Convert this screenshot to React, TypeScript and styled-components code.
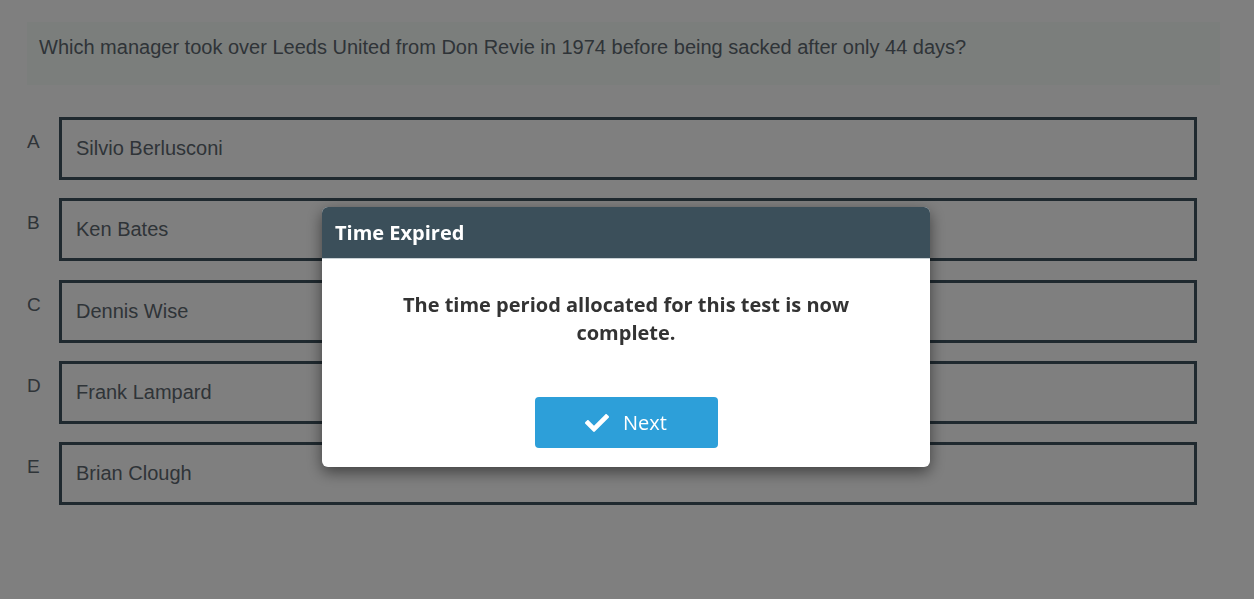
import styled, { createGlobalStyle } from "styled-components";
import { FaCheck } from "react-icons/fa";

const GlobalStyle = createGlobalStyle`
  html, body {
    margin: 0;
    padding: 0;
    background: #ffffff;
  }
  body {
    font-family: "Liberation Sans", Arial, sans-serif;
  }
`;

const Page = styled.main`
  width: 1254px;
  height: 599px;
  box-sizing: border-box;
  padding: 22px 34px 0 27px;
`;

const Question = styled.div`
  height: 63px;
  box-sizing: border-box;
  background: #f6fcf9;
  padding: 14px 12px 0;
  font-size: 20px;
  color: #5e6870;
`;

const Options = styled.ol`
  list-style: none;
  margin: 32px 0 0;
  padding: 0;
  display: flex;
  flex-direction: column;
  gap: 18.3px;
  width: 1170px;
`;

const OptionRow = styled.li`
  display: flex;
  align-items: flex-start;
`;

const Letter = styled.span`
  width: 32px;
  padding-top: 14px;
  font-size: 19px;
  color: #5e6870;
`;

const Answer = styled.div`
  flex: 1;
  height: 63px;
  box-sizing: border-box;
  border: 3px solid #3e525e;
  padding: 0 14px;
  display: flex;
  align-items: center;
  font-size: 20px;
  color: #5e6870;
`;

const Overlay = styled.div`
  position: fixed;
  inset: 0;
  background: rgba(0, 0, 0, 0.5);
  display: flex;
  justify-content: center;
  align-items: flex-start;
  padding-top: 207px;
  padding-right: 2px;
  box-sizing: border-box;
`;

const Modal = styled.div`
  width: 608px;
  background: #ffffff;
  border-radius: 6px;
  overflow: hidden;
  box-shadow: 0 5px 15px rgba(0, 0, 0, 0.5);
  font-family: "Open Sans", "Noto Sans", sans-serif;
`;

const ModalHeader = styled.header`
  height: 52px;
  background: #3b4f5a;
  display: flex;
  align-items: center;
  padding: 0 13px;
  border-bottom: 1px solid #c9d1d5;
  box-sizing: border-box;
`;

const ModalTitle = styled.h2`
  margin: 0;
  font-size: 20px;
  font-weight: 700;
  color: #ffffff;
`;

const ModalBody = styled.div`
  padding: 32px 60px 19px;
  display: flex;
  flex-direction: column;
  align-items: center;
`;

const Message = styled.p`
  margin: 0;
  text-align: center;
  font-size: 20px;
  line-height: 28px;
  font-weight: 700;
  color: #333333;
`;

const NextButton = styled.button`
  margin-top: 50px;
  width: 183px;
  height: 51px;
  border: none;
  border-radius: 4px;
  background: #2d9fd9;
  color: #ffffff;
  font-family: "Open Sans", "Noto Sans", sans-serif;
  font-size: 20px;
  display: flex;
  align-items: center;
  justify-content: center;
  gap: 14px;
  cursor: pointer;
  svg {
    width: 24px;
    height: 24px;
  }
`;

const options = [
  { letter: "A", text: "Silvio Berlusconi" },
  { letter: "B", text: "Ken Bates" },
  { letter: "C", text: "Dennis Wise" },
  { letter: "D", text: "Frank Lampard" },
  { letter: "E", text: "Brian Clough" },
];

export default function App() {
  return (
    <>
      <GlobalStyle />
      <Page>
        <Question>
          Which manager took over Leeds United from Don Revie in 1974 before being sacked after only 44 days?
        </Question>
        <Options>
          {options.map((o) => (
            <OptionRow key={o.letter}>
              <Letter>{o.letter}</Letter>
              <Answer>{o.text}</Answer>
            </OptionRow>
          ))}
        </Options>
      </Page>
      <Overlay>
        <Modal>
          <ModalHeader>
            <ModalTitle>Time Expired</ModalTitle>
          </ModalHeader>
          <ModalBody>
            <Message>The time period allocated for this test is now complete.</Message>
            <NextButton>
              <FaCheck />
              Next
            </NextButton>
          </ModalBody>
        </Modal>
      </Overlay>
    </>
  );
}
